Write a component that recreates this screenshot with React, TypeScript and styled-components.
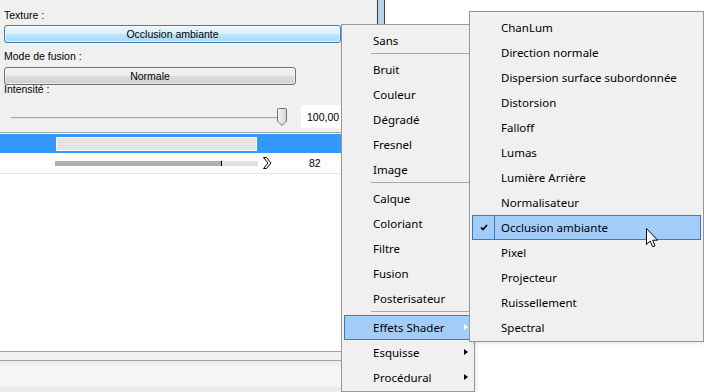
import React from 'react';
import styled, { createGlobalStyle } from 'styled-components';

const GlobalStyle = createGlobalStyle`
  html, body {
    margin: 0;
    padding: 0;
  }
  body {
    width: 704px;
    height: 392px;
    overflow: hidden;
    background: #fff;
  }
`;

const Screen = styled.div`
  position: relative;
  width: 704px;
  height: 392px;
  display: flex;
  background: #fff;
  font-family: 'Liberation Sans', Arial, sans-serif;
  color: #000;
  overflow: hidden;
`;

const LeftPanel = styled.div`
  width: 377px;
  display: flex;
  flex-direction: column;
  background: #f0f0f0;
`;

const Settings = styled.div`
  height: 133px;
  box-sizing: border-box;
  border-bottom: 1px solid #a0a0a0;
  padding: 9px 0 0 4px;
  display: flex;
  flex-direction: column;
  align-items: flex-start;
`;

const Label = styled.div<{ $gap?: number }>`
  font-size: 10.5px;
  line-height: 13px;
  height: 13px;
  margin-top: ${(p) => p.$gap ?? 0}px;
`;

const PushButton = styled.div<{ $hot?: boolean; $width: number; $gap: number }>`
  width: ${(p) => p.$width}px;
  height: 18px;
  margin-top: ${(p) => p.$gap}px;
  box-sizing: border-box;
  border: 1px solid ${(p) => (p.$hot ? '#3c7fb1' : '#707070')};
  border-radius: 3px;
  background: ${(p) =>
    p.$hot
      ? 'linear-gradient(#eaf6fd 0%, #d9f0fc 50%, #bee6fd 50%, #a7d9f5 100%)'
      : 'linear-gradient(#f2f2f2 0%, #ebebeb 50%, #dddddd 50%, #cfcfcf 100%)'};
  box-shadow: inset 0 0 0 1px rgba(255, 255, 255, 0.55);
  display: flex;
  align-items: center;
  justify-content: center;
  font-size: 10.5px;
`;

const SliderRow = styled.div`
  display: flex;
  align-items: center;
  margin-top: 9px;
  height: 23px;
`;

const SliderBox = styled.div`
  width: 276px;
  margin-left: 7px;
  display: flex;
  align-items: center;
`;

const Track = styled.div`
  flex: 1;
  height: 1px;
  border-top: 1px solid #a6a6a6;
  background: #e4e4e4;
  margin-top: 2px;
`;

const Thumb = styled.svg`
  width: 10px;
  height: 18px;
  margin-left: -2px;
  margin-top: 1px;
`;

const ValueBox = styled.div`
  width: 40px;
  height: 23px;
  margin-left: 14px;
  background: #fff;
  font-size: 10.5px;
  display: flex;
  align-items: center;
  padding-left: 6px;
  box-sizing: border-box;
`;

const List = styled.div`
  flex: 1;
  background: #fff;
  padding-top: 1px;
`;

const SelectedRow = styled.div`
  height: 19px;
  background: #3399ff;
  display: flex;
  align-items: center;
  padding-left: 56px;
`;

const NameField = styled.div`
  width: 201px;
  height: 14px;
  box-sizing: border-box;
  border: 1px solid #fff;
  background: #e4e4e4;
`;

const ProgressRow = styled.div`
  height: 20px;
  border-bottom: 1px solid #e8e8e8;
  display: flex;
  align-items: center;
  padding-left: 55px;
  font-size: 10.5px;
`;

const Bar = styled.div`
  width: 203px;
  height: 5px;
  background: #e1e1e1;
  display: flex;
`;

const BarFill = styled.div`
  height: 100%;
  background: #b0b0b0;
  border-right: 1px solid #000;
`;

const BarArrow = styled.svg`
  width: 10px;
  height: 12px;
  margin-left: 4px;
`;

const BarValue = styled.div`
  margin-left: 37px;
`;

const FooterStrip = styled.div`
  height: 8px;
  border-top: 1px solid #a0a0a0;
  background: #f0f0f0;
`;

const StatusBar = styled.div`
  height: 31px;
  border-top: 1px solid #a0a0a0;
  background: linear-gradient(#ececec 0px, #efefef 5px, #f5f5f5 5px, #f5f5f5 26px, #ebebeb 26px);
`;

const ScrollStrip = styled.div`
  width: 6px;
  border-left: 1px solid #3f3f3f;
  border-right: 1px solid #3f3f3f;
  background: #b9d1ea;
`;

const RightArea = styled.div`
  flex: 1;
  background: #fff;
`;

const Menu = styled.div<{ $left: number; $top: number; $width: number }>`
  position: absolute;
  left: ${(p) => p.$left}px;
  top: ${(p) => p.$top}px;
  width: ${(p) => p.$width}px;
  box-sizing: border-box;
  border: 1px solid #979797;
  background: #f0f0f0;
  padding: 3px 2px 1px;
  box-shadow: 2px 2px 2px rgba(0, 0, 0, 0.08);
  font-family: 'Noto Sans', 'Open Sans', sans-serif;
  font-size: 11.5px;
`;

const MenuItem = styled.div<{ $active?: boolean }>`
  position: relative;
  height: 25px;
  box-sizing: border-box;
  display: flex;
  align-items: center;
  padding-left: 28px;
  border: 1px solid ${(p) => (p.$active ? '#3a78c8' : 'transparent')};
  background: ${(p) => (p.$active ? '#a3cdf7' : 'transparent')};
`;

const CheckCell = styled.div`
  position: absolute;
  left: 0;
  top: 0;
  bottom: 0;
  width: 21px;
  border-right: 1px solid #3a78c8;
  display: flex;
  align-items: center;
  justify-content: center;
`;

const SubArrow = styled.span<{ $light?: boolean }>`
  position: absolute;
  right: 3px;
  top: 8px;
  width: 0;
  height: 0;
  border-top: 3.5px solid transparent;
  border-bottom: 3.5px solid transparent;
  border-left: 4px solid ${(p) => (p.$light ? '#fff' : '#000')};
`;

const Separator = styled.div`
  height: 4px;
  margin-left: 27px;
  border-top: 1px solid #a8a8a8;
  box-sizing: border-box;
`;

const Cursor = styled.svg`
  position: absolute;
  left: 646px;
  top: 228px;
  width: 13px;
  height: 20px;
`;

const mainItems: (string | null)[] = [
  'Sans',
  null,
  'Bruit',
  'Couleur',
  'Dégradé',
  'Fresnel',
  'Image',
  null,
  'Calque',
  'Coloriant',
  'Filtre',
  'Fusion',
  'Posterisateur',
  null,
];

const shaderItems = [
  'ChanLum',
  'Direction normale',
  'Dispersion surface subordonnée',
  'Distorsion',
  'Falloff',
  'Lumas',
  'Lumière Arrière',
  'Normalisateur',
  'Occlusion ambiante',
  'Pixel',
  'Projecteur',
  'Ruissellement',
  'Spectral',
];

const App: React.FC = () => {
  return (
    <>
      <GlobalStyle />
      <Screen>
        <LeftPanel>
          <Settings>
            <Label>Texture :</Label>
            <PushButton $hot $width={337} $gap={3}>
              Occlusion ambiante
            </PushButton>
            <Label $gap={7}>Mode de fusion :</Label>
            <PushButton $width={292} $gap={4}>
              Normale
            </PushButton>
            <Label $gap={-2}>Intensité :</Label>
            <SliderRow>
              <SliderBox>
                <Track />
                <Thumb viewBox="0 0 10 18">
                  <defs>
                    <linearGradient id="thumbFill" x1="0" y1="0" x2="1" y2="0">
                      <stop offset="0" stopColor="#f4f4f4" />
                      <stop offset="1" stopColor="#d6d6d6" />
                    </linearGradient>
                  </defs>
                  <path
                    d="M1.5 0.5 H8.5 Q9.5 0.5 9.5 1.5 V13 L5 17.5 L0.5 13 V1.5 Q0.5 0.5 1.5 0.5 Z"
                    fill="url(#thumbFill)"
                    stroke="#707070"
                  />
                </Thumb>
              </SliderBox>
              <ValueBox>100,00</ValueBox>
            </SliderRow>
          </Settings>
          <List>
            <SelectedRow>
              <NameField />
            </SelectedRow>
            <ProgressRow>
              <Bar>
                <BarFill style={{ width: `${Math.round(203 * 0.82)}px` }} />
              </Bar>
              <BarArrow viewBox="0 0 10 12">
                <path d="M1.5 0.5 L4.5 0.5 L9 6 L4.5 11.5 L1.5 11.5 L6 6 Z" fill="#fff" stroke="#000" />
              </BarArrow>
              <BarValue>82</BarValue>
            </ProgressRow>
          </List>
          <FooterStrip />
          <StatusBar />
        </LeftPanel>
        <ScrollStrip />
        <RightArea />

        <Menu $left={341} $top={24} $width={134}>
          {mainItems.map((item, i) =>
            item === null ? <Separator key={i} /> : <MenuItem key={i}>{item}</MenuItem>,
          )}
          <MenuItem $active>
            Effets Shader
            <SubArrow $light />
          </MenuItem>
          <MenuItem>
            Esquisse
            <SubArrow />
          </MenuItem>
          <MenuItem>
            Procédural
            <SubArrow />
          </MenuItem>
        </Menu>

        <Menu $left={469} $top={11} $width={235}>
          {shaderItems.map((item) =>
            item === 'Occlusion ambiante' ? (
              <MenuItem key={item} $active>
                <CheckCell>
                  <svg width="8" height="7" viewBox="0 0 8 7">
                    <path d="M1 3.5 L3 5.5 L7 1" fill="none" stroke="#000" strokeWidth="1.7" />
                  </svg>
                </CheckCell>
                {item}
              </MenuItem>
            ) : (
              <MenuItem key={item}>{item}</MenuItem>
            ),
          )}
        </Menu>

        <Cursor viewBox="0 0 13 20">
          <path
            d="M0.5 0.5 L0.5 16.5 L4.2 13 L6.7 18.7 L9 17.7 L6.6 12.2 L11.5 12.2 Z"
            fill="#fff"
            stroke="#000"
            strokeLinejoin="round"
          />
        </Cursor>
      </Screen>
    </>
  );
};

export default App;
